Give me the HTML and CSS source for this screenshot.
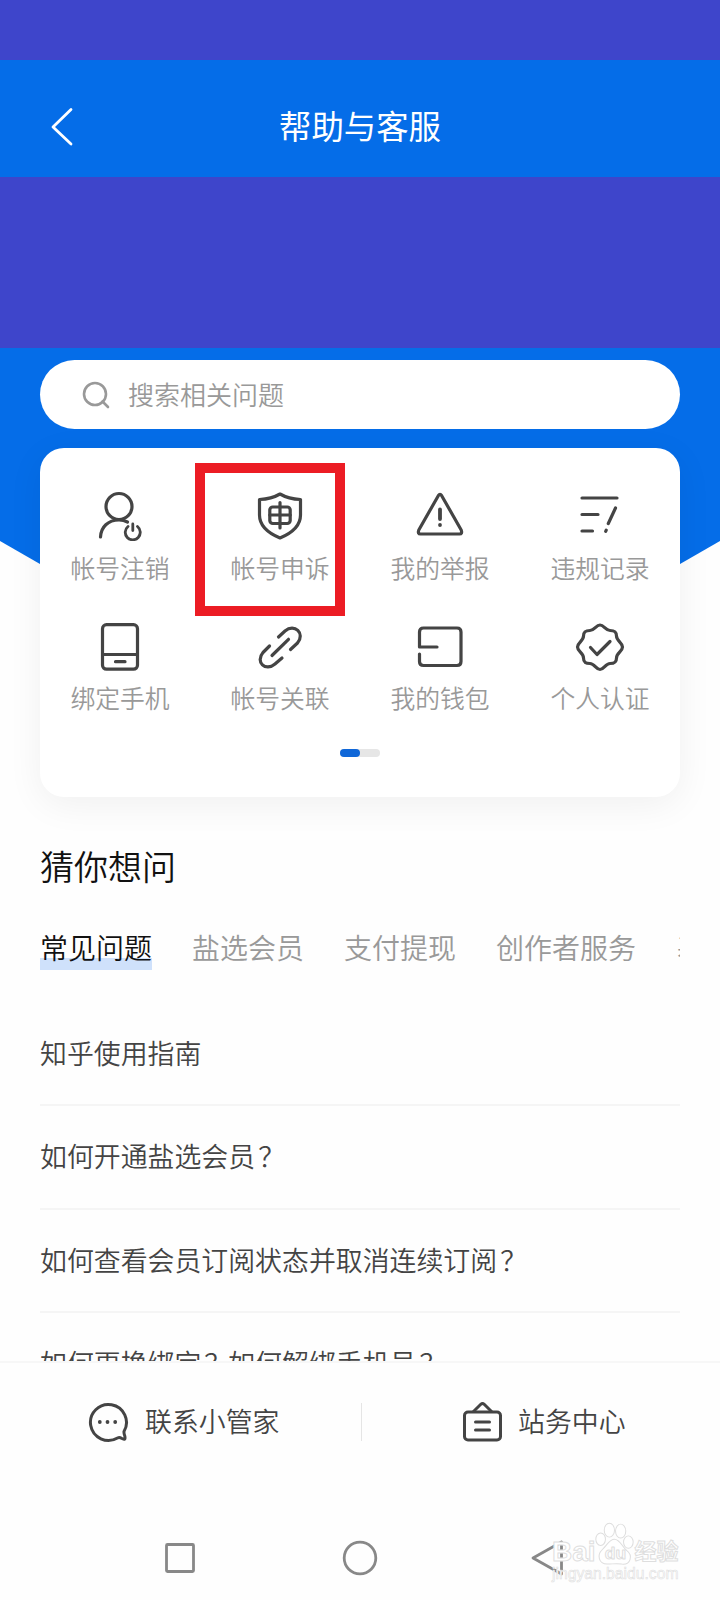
FILE: index.html
```
<!DOCTYPE html>
<html lang="zh-CN">
<head>
<meta charset="utf-8">
<title>帮助与客服</title>
<link rel="stylesheet" href="styles.css">
</head>
<body>
<div class="screen">
  <div class="status"></div>
  <header class="header">
    <svg class="back" width="24" height="40" viewBox="0 0 24 40"><path d="M21 2.500L3 20L21 37"/></svg>
    <h1 class="title">帮助与客服</h1>
  </header>
  <div class="banner"></div>
  <section class="hero">
    <div class="search">
      <svg class="search-icon" width="28" height="28" viewBox="0 0 28 28"><circle cx="13" cy="13" r="11"/><path d="M20.500 20.500L26 26"/></svg>
      <span>搜索相关问题</span>
    </div>
    <div class="card">
      <div class="grid">
        <div class="item">
          <svg class="icon" viewBox="0 0 52 52"><circle cx="25" cy="17.500" r="13"/><path d="M6.500 48C7 38 14 31 25 31C28 31 31 31.700 33.500 33"/><path class="thin" d="M34 37.500A7.500 7.500 0 1 0 43.500 37.500M38.800 35V41.500"/></svg>
          <span>帐号注销</span>
        </div>
        <div class="item marked">
          <svg class="icon" viewBox="0 0 52 52"><path d="M26 5C32 8.500 39 10.200 46.500 10.500V26C46.500 36 38 44 26 49C14 44 5.500 36 5.500 26V10.500C13 10.200 20 8.500 26 5Z"/><rect x="15.800" y="18" width="20.400" height="16.500" rx="3"/><path d="M15.800 26H36.200M26 13.500V39"/></svg>
          <span>帐号申诉</span>
        </div>
        <div class="item">
          <svg class="icon" viewBox="0 0 52 52"><path d="M24.300 6.700Q26 4.200 27.700 6.700L47.200 41Q48.600 45 45.500 45H6.500Q3.400 45 4.800 41Z"/><path d="M26 20.500V30M26 36V36.100" class="bold"/></svg>
          <span>我的举报</span>
        </div>
        <div class="item">
          <svg class="icon" viewBox="0 0 52 52"><path d="M8 9H43M8 25.500H24M8 42H18.500M41.500 19L34.300 34.500M32.200 41.200L31.700 42.300"/></svg>
          <span>违规记录</span>
        </div>
        <div class="item">
          <svg class="icon low" viewBox="0 0 52 52"><rect x="8.500" y="3.700" width="35" height="44.500" rx="4"/><path d="M8.500 33.500H43.500M21.500 40.700H31"/></svg>
          <span>绑定手机</span>
        </div>
        <div class="item">
          <svg class="icon low" viewBox="0 0 52 52"><path d="M24.500 16L31 10C40.500 2 51.500 12.500 43.500 22L36.500 28.500M15.500 25L9 31.500C1 41 11.500 51 21 43L28 37M18 34.500L34.500 18.300"/></svg>
          <span>帐号关联</span>
        </div>
        <div class="item">
          <svg class="icon low" viewBox="0 0 52 52"><path d="M23 26H5.500V11Q5.500 7 9.500 7H43Q47 7 47 11V40.500Q47 44.500 43 44.500H9.500Q5.500 44.500 5.500 40.500V33"/></svg>
          <span>我的钱包</span>
        </div>
        <div class="item">
          <svg class="icon low" viewBox="0 0 52 52"><path d="M26 4C30 4 31.500 9.500 36 9.500C40 9.500 42.500 10.500 42.500 15C42.500 20 48.500 21.500 48.500 26C48.500 30.500 42.500 32 42.500 37C42.500 41.500 40 42.500 36 42.500C31.500 42.500 30 48.500 26 48.500C22 48.500 20.500 42.500 16 42.500C12 42.500 9.500 41.500 9.500 37C9.500 32 3.500 30.500 3.500 26C3.500 21.500 9.500 20 9.500 15C9.500 10.500 12 9.500 16 9.500C20.500 9.500 22 4 26 4Z"/><path d="M16.500 26.500L23 33.500L36 20.500"/></svg>
          <span>个人认证</span>
        </div>
      </div>
      <div class="pager"><i></i></div>
    </div>
  </section>
  <main class="ask">
    <h2 class="ask-title">猜你想问</h2>
    <nav class="tabs">
      <span class="tab active">常见问题</span>
      <span class="tab">盐选会员</span>
      <span class="tab">支付提现</span>
      <span class="tab">创作者服务</span>
      <span class="tab">基</span>
    </nav>
    <ul class="list">
      <li>知乎使用指南</li>
      <li>如何开通盐选会员<span class="q">？</span></li>
      <li>如何查看会员订阅状态并取消连续订阅<span class="q">？</span></li>
      <li>如何更换绑定<span class="q">？</span>如何解绑手机号<span class="q">？</span></li>
    </ul>
  </main>
  <footer class="contact">
    <div class="contact-item">
      <svg class="contact-icon" width="42" height="42" viewBox="0 0 42 42"><path d="M37 30.500A18 18 0 1 0 30.500 37Q32.500 36 34.500 37.300Q36.500 38.500 37.800 38Q38.300 37.500 37.800 35Q36.800 32.500 37 30.500Z"/><path class="dots" d="M12.800 21V21.010M20.500 21V21.010M28.200 21V21.010"/></svg>
      <span>联系小管家</span>
    </div>
    <div class="contact-item">
      <svg class="contact-icon" width="42" height="42" viewBox="0 0 42 42"><rect x="2.500" y="11" width="36" height="28" rx="3.500"/><path d="M11.500 10.500L18.800 3.300Q20.500 1.700 22.200 3.300L29.500 10.500M13.500 21H27.500M13.500 29H27.500"/></svg>
      <span>站务中心</span>
    </div>
  </footer>
  <div class="navbar">
    <svg width="36" height="38" viewBox="0 0 36 38"><rect x="4.500" y="5.500" width="27" height="27" rx="1"/></svg>
    <svg width="36" height="38" viewBox="0 0 36 38"><circle cx="18" cy="19" r="15.800"/></svg>
    <svg width="36" height="38" viewBox="0 0 36 38"><path d="M31.500 3V35L3 19Z"/></svg>
    <div class="watermark">
      <div class="wm-brand"><span>Bai</span><svg class="paw" width="39" height="44" viewBox="0 0 38 46" preserveAspectRatio="none"><ellipse cx="5.500" cy="18" rx="4.700" ry="6.500"/><ellipse cx="14" cy="8.500" rx="5" ry="7.300"/><ellipse cx="25" cy="9.500" rx="5" ry="7.300"/><ellipse cx="32.500" cy="21" rx="4.700" ry="6.500"/><path d="M19 18C14 18 12 24 7 29C2 34 3 44 12 44C17 44 21 43 26 44C35 45 37 35 31 30C26 25 24 18 19 18Z"/><text x="9.500" y="39">du</text></svg><span class="wm-cn">经验</span></div>
      <div class="wm-url">jingyan.baidu.com</div>
    </div>
  </div>
</div>
</body>
</html>
```
FILE: styles.css
```
*, *::before, *::after { box-sizing: border-box; }
body {
  margin: 0;
  background: #fefefe;
  font-family: "Noto Sans CJK SC", sans-serif;
  font-weight: 350;
}
h1, h2, ul { margin: 0; padding: 0; font-weight: inherit; list-style: none; }
svg { display: block; flex: none; fill: none; stroke-linecap: round; stroke-linejoin: round; }
.screen {
  width: 720px;
  height: 1600px;
  overflow: hidden;
  display: flex;
  flex-direction: column;
}
.status { height: 60px; background: #3e45cb; }
.header {
  height: 117px;
  padding: 17px 50px 0;
  background: #056de8;
  display: grid;
  grid-template-columns: 24px 1fr 24px;
  align-items: center;
}
.back { stroke: #fff; stroke-width: 2.8; }
.title { font-size: 32.400px; font-weight: 400; line-height: 48px; padding-bottom: 4px; text-align: center; color: #fff; }
.banner { height: 171px; background: #3e45cb; }
.hero {
  height: 449px;
  padding: 12px 40px 0;
  position: relative;
  z-index: 0;
}
.hero::before {
  content: "";
  position: absolute;
  z-index: -1;
  inset: 0 0 auto;
  height: 400px;
  background: #056de8;
  clip-path: polygon(0 0, 100% 0, 100% 193px, 50% 400px, 0 193px);
}
.search {
  height: 69px;
  border-radius: 35px;
  padding-left: 42px;
  background: #fff;
  display: flex;
  align-items: center;
  gap: 18px;
  font-size: 26px;
  color: #999;
}
.search span { line-height: 40px; padding-bottom: 2px; }
.search-icon { stroke: #999; stroke-width: 2.6; }
.card {
  height: 349px;
  margin-top: 19px;
  padding-top: 41px;
  border-radius: 24px;
  background: #fff;
  box-shadow: 0 8px 36px rgba(0, 0, 0, .06);
}
.grid { display: grid; grid-template-columns: repeat(4, 160px); grid-auto-rows: 130px; }
.item {
  display: flex;
  flex-direction: column;
  align-items: center;
  gap: 7px;
  position: relative;
  font-size: 24.800px;
  line-height: 38px;
  color: #999;
}
.icon { width: 52px; height: 52px; stroke: #444; stroke-width: 3.2; }
.icon.low { margin: 2px 0 -2px; }
.icon .thin { stroke-width: 2.800; }
.icon .bold { stroke-width: 3.800; }
.marked::after {
  content: "";
  position: absolute;
  left: -5px;
  top: -26px;
  width: 150px;
  height: 153px;
  border: 10px solid #ec1c24;
}
.pager { width: 40px; height: 8px; margin: 0 auto; border-radius: 4px; background: #e6e6e6; }
.pager i { display: block; width: 20px; height: 8px; border-radius: 4px; background: #0f67d8; }
.ask { height: 566px; padding: 44px 40px 0; overflow: hidden; border-bottom: 2px solid #f7f7f7; }
.ask-title { font-size: 34px; line-height: 50px; color: #111; }
.tabs { display: flex; gap: 40px; margin-top: 32px; overflow: hidden; white-space: nowrap; }
.tab { flex: none; font-size: 28px; line-height: 48px; color: #999; }
.tab.active { color: #111; background: linear-gradient(#cfe1fb, #cfe1fb) 0 35px / 100% 12px no-repeat; }
.tab:last-child { padding-left: 1px; }
.list { margin-top: 32px; }
.list li {
  height: 103.300px;
  border-bottom: 2px solid #f5f5f5;
  font-size: 26.900px;
  line-height: 99px;
  color: #444;
  white-space: nowrap;
}
.q { margin: 0 -3px 0 3px; }
.contact { height: 118px; display: grid; grid-template-columns: 361px 359px; }
.contact-item {
  display: flex;
  align-items: center;
  gap: 16px;
  padding-left: 87px;
  font-size: 26.900px;
  line-height: 40px;
  color: #444;
}
.contact-item span { padding-bottom: 3px; }
.contact-item + .contact-item {
  gap: 14px;
  padding-left: 101px;
  background: linear-gradient(#e5e5e5, #e5e5e5) 0 50% / 1px 38px no-repeat;
}
.contact-icon { stroke: #444; stroke-width: 3; }
.contact-icon .dots { stroke-width: 3.800; }
.navbar {
  height: 119px;
  padding: 58px 156px 0 162px;
  display: grid;
  grid-template-columns: 180px 188px 36px;
  position: relative;
  stroke: #888;
  stroke-width: 2.800;
}
.watermark {
  position: absolute;
  left: 552px;
  top: 41px;
  width: 130px;
  white-space: nowrap;
  font-family: "Liberation Sans", "Noto Sans CJK SC", sans-serif;
  color: #fff;
  -webkit-text-stroke: 1px #dedede;
  stroke: #dedede;
  stroke-width: 1;
}
.wm-brand { display: flex; align-items: flex-end; font-size: 28px; font-weight: 700; line-height: 28px; height: 44px; }
.paw { fill: #fff; margin-left: -1px; }
.paw text { font-size: 17px; font-weight: 700; }
.wm-cn { font-size: 22px; margin-left: 1px; }
.wm-url { font-size: 15.700px; line-height: 16px; -webkit-text-stroke: .6px #dedede; }
```
